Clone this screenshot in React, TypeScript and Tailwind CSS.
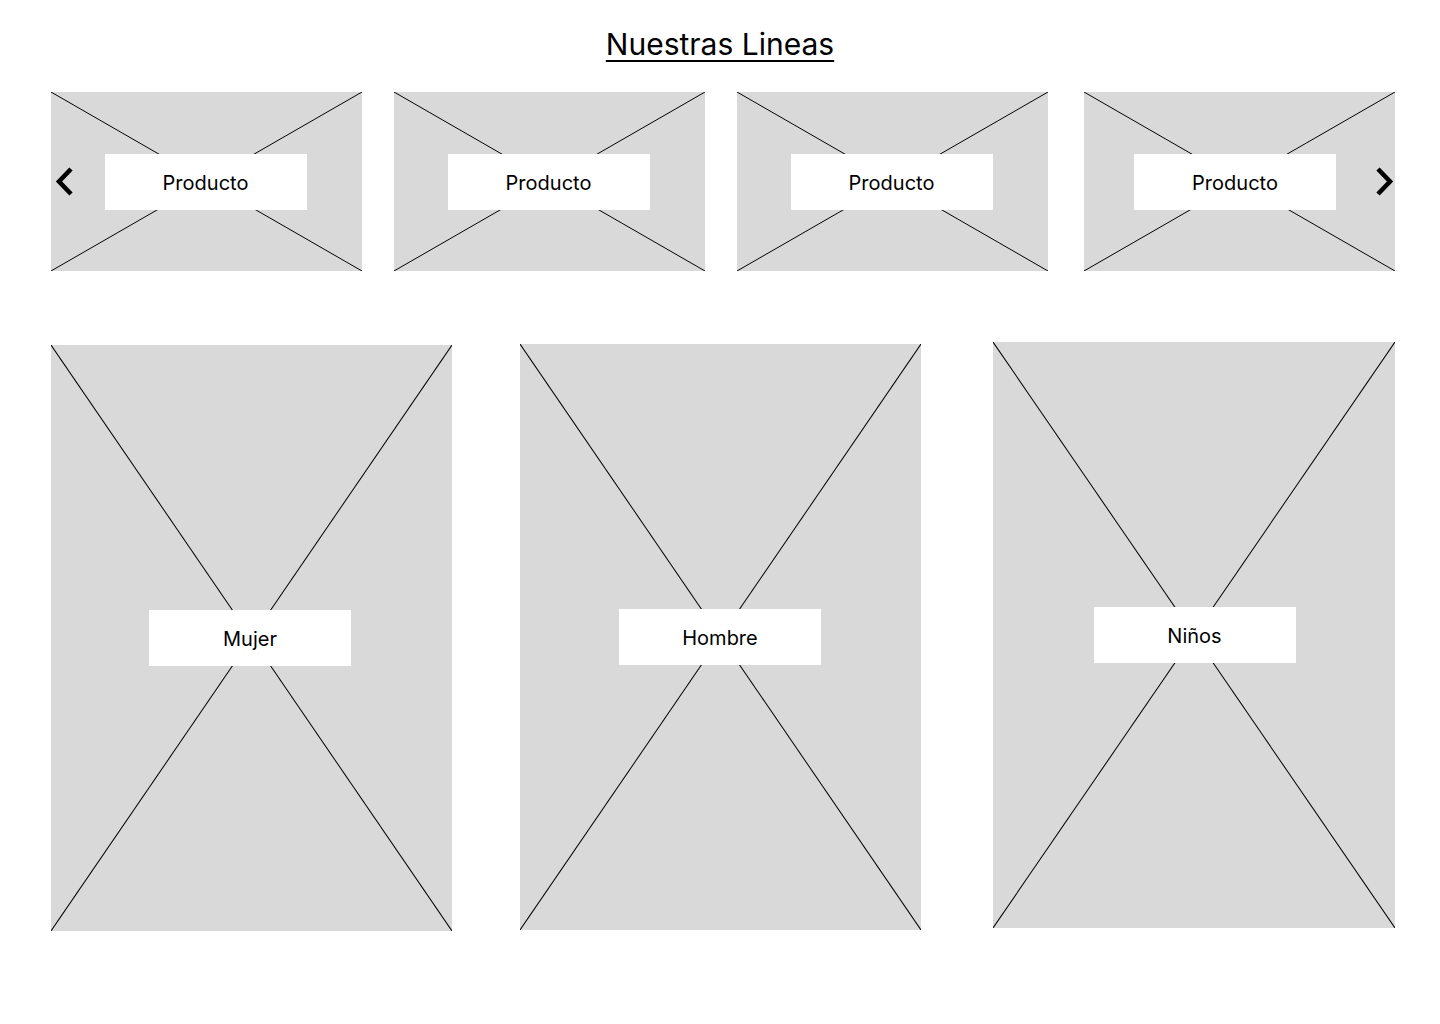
import React from "react";

const font = { fontFamily: "Inter, 'Noto Sans', sans-serif" };

function Cross() {
  return (
    <svg className="absolute inset-0 h-full w-full" viewBox="0 0 100 100" preserveAspectRatio="none">
      <line x1="0" y1="0" x2="100" y2="100" stroke="#000" strokeWidth="1" vectorEffect="non-scaling-stroke" />
      <line x1="100" y1="0" x2="0" y2="100" stroke="#000" strokeWidth="1" vectorEffect="non-scaling-stroke" />
    </svg>
  );
}

function Placeholder({ label, className, labelClass = "" }: { label: string; className: string; labelClass?: string }) {
  return (
    <div className={`relative flex shrink-0 items-center justify-center bg-[#d9d9d9] ${className}`}>
      <Cross />
      <div
        className={`relative flex h-[56px] w-[202px] items-center justify-center bg-white pt-[2px] text-[20px] text-black ${labelClass}`}
      >
        {label}
      </div>
    </div>
  );
}

function Chevron({ dir }: { dir: "left" | "right" }) {
  return (
    <svg width="22" height="32" viewBox="0 0 22 32" className="absolute top-[74px]" style={dir === "left" ? { left: 3 } : { right: 0 }}>
      <path
        d={dir === "left" ? "M17 3 L5 15.5 L17 28" : "M5 3 L17 15.5 L5 28"}
        fill="none"
        stroke="#000"
        strokeWidth="4.6"
        strokeLinecap="butt"
        strokeLinejoin="miter"
      />
    </svg>
  );
}

export default function App() {
  return (
    <div className="min-h-[1024px] w-[1440px] bg-white" style={font}>
      <h1 className="pt-[25px] text-center text-[30px] leading-[38px] text-black">
        <span className="underline decoration-2 underline-offset-[5px]">Nuestras Lineas</span>
      </h1>

      <div className="relative mt-[29px] flex pl-[51px]">
        <Placeholder label="Producto" className="h-[179px] w-[311px]" labelClass="mr-[2px]" />
        <Placeholder label="Producto" className="ml-[32px] h-[179px] w-[311px]" labelClass="mr-[2px]" />
        <Placeholder label="Producto" className="ml-[32px] h-[179px] w-[311px]" labelClass="mr-[2px]" />
        <Placeholder label="Producto" className="ml-[36px] h-[179px] w-[311px]" labelClass="mr-[9px]" />
        <div className="pointer-events-none absolute inset-y-0 left-[51px] w-[1344px]">
          <Chevron dir="left" />
          <Chevron dir="right" />
        </div>
      </div>

      <div className="mt-[71px] flex items-start pl-[51px]">
        <Placeholder label="Mujer" className="mt-[3px] h-[586px] w-[401px]" labelClass="mr-[3px]" />
        <Placeholder label="Hombre" className="ml-[68px] mt-[2px] h-[586px] w-[401px]" labelClass="mr-[1px]" />
        <Placeholder label="Niños" className="ml-[72px] h-[586px] w-[402px]" labelClass="ml-[1px]" />
      </div>
    </div>
  );
}
